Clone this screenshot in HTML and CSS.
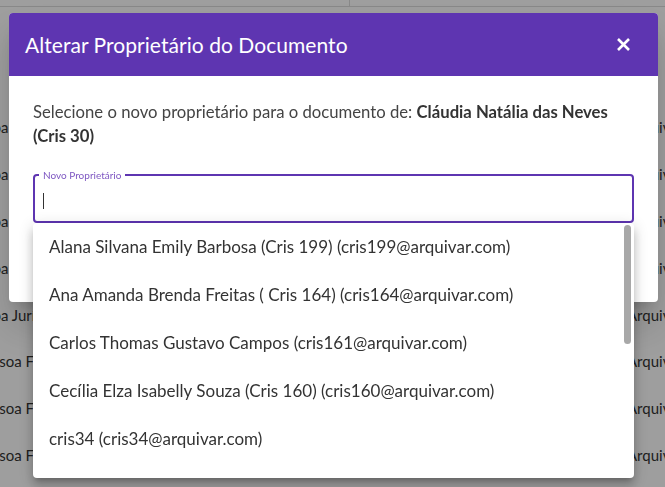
FILE: index.html
```html
<!DOCTYPE html>
<html lang="pt-BR">
<head>
<meta charset="utf-8">
<title>Alterar Proprietário do Documento</title>
<link rel="stylesheet" href="styles.css">
</head>
<body>
<div class="page">
  <div class="thead"><div class="cell"></div><div class="cell mid"></div><div class="cell"></div></div>
  <div class="tbody">
    <div class="row"><div class="cell c1">Pessoa Jurídica</div><div class="cell mid"></div><div class="cell c3">Arquivado</div></div>
    <div class="row"><div class="cell c1">Pessoa Jurídica</div><div class="cell mid"></div><div class="cell c3">Arquivado</div></div>
    <div class="row"><div class="cell c1">Pessoa Jurídica</div><div class="cell mid"></div><div class="cell c3">Arquivado</div></div>
    <div class="row"><div class="cell c1">Pessoa Jurídica</div><div class="cell mid"></div><div class="cell c3">Arquivado</div></div>
    <div class="row"><div class="cell c1">Pessoa Jurídica</div><div class="cell mid"></div><div class="cell c3">Arquivado</div></div>
    <div class="row"><div class="cell c1">Pessoa Física</div><div class="cell mid"></div><div class="cell c3">Arquivado</div></div>
    <div class="row"><div class="cell c1">Pessoa Física</div><div class="cell mid"></div><div class="cell c3">Arquivado</div></div>
    <div class="row"><div class="cell c1">Pessoa Física</div><div class="cell mid"></div><div class="cell c3">Arquivado</div></div>
  </div>
</div>

<div class="overlay">
  <div class="modal">
    <div class="modal-header">
      <h2 class="modal-title">Alterar Proprietário do Documento</h2>
      <svg class="close" width="15" height="15" viewBox="0 0 15 15" aria-label="Fechar">
        <path d="M2 2 L13 13 M13 2 L2 13" stroke="#fff" stroke-width="2.6" stroke-linecap="butt" fill="none"/>
      </svg>
    </div>
    <div class="modal-body">
      <p class="intro">Selecione o novo proprietário para o documento de: <strong>Cláudia Natália das Neves (Cris 30)</strong></p>
      <div class="field">
        <fieldset class="outline">
          <legend class="label">Novo Proprietário</legend>
          <div class="input"><span class="caret"></span></div>
        </fieldset>
        <div class="menu">
          <ul class="options">
            <li class="option">Alana Silvana Emily Barbosa (Cris 199) (cris199@arquivar.com)</li>
            <li class="option">Ana Amanda Brenda Freitas ( Cris 164) (cris164@arquivar.com)</li>
            <li class="option">Carlos Thomas Gustavo Campos (cris161@arquivar.com)</li>
            <li class="option">Cecília Elza Isabelly Souza (Cris 160) (cris160@arquivar.com)</li>
            <li class="option">cris34 (cris34@arquivar.com)</li>
            <li class="option">Daniela Luana Rocha (Cris 158) (cris158@arquivar.com)</li>
            <li class="option">Eduardo Henrique Lima (Cris 150) (cris150@arquivar.com)</li>
            <li class="option">Fernanda Beatriz Costa (Cris 145) (cris145@arquivar.com)</li>
            <li class="option">Gabriel Mateus Alves (Cris 140) (cris140@arquivar.com)</li>
            <li class="option">Helena Sofia Martins (Cris 132) (cris132@arquivar.com)</li>
            <li class="option">Isabela Vitória Ramos (Cris 128) (cris128@arquivar.com)</li>
          </ul>
          <div class="thumb"></div>
        </div>
      </div>
    </div>
  </div>
</div>
</body>
</html>
```

FILE: styles.css
```css
* { box-sizing: border-box; }

body {
  margin: 0;
  font-family: Lato, "Noto Sans", sans-serif;
  color: #333;
  background: #fff;
}

/* background page (table behind the overlay) */
.page {
  height: 487px;
  overflow: hidden;
}

.thead,
.row {
  display: grid;
  grid-template-columns: 449px 278px 1fr;
  margin-left: -100px;
}

.thead {
  height: 7px;
  border-bottom: 1px solid #dcdcdc;
}

.tbody {
  padding-top: 97px;
}

.row {
  height: 46.8px;
  align-items: center;
  font-size: 15px;
  color: #333;
}

.cell { height: 100%; display: flex; align-items: center; }

.mid { border-left: 1px solid #dcdcdc; }

.c1 {
  justify-content: flex-end;
  padding-right: 287px;
  white-space: nowrap;
}

.c3 { white-space: nowrap; }

/* overlay + modal */
.overlay {
  position: fixed;
  inset: 0;
  background: rgba(0, 0, 0, 0.38);
  display: flex;
  align-items: flex-start;
  padding: 13px 7px 0 9px;
}

.modal {
  flex: 1;
  background: #fff;
  border-radius: 4px;
  box-shadow: 0 11px 15px -7px rgba(0,0,0,.2), 0 24px 38px 3px rgba(0,0,0,.14);
}

.modal-header {
  height: 63px;
  background: #5e35b1;
  border-radius: 4px 4px 0 0;
  display: flex;
  align-items: center;
  justify-content: space-between;
  padding: 0 27px 0 16px;
}

.modal-title {
  margin: 0;
  font-size: 21px;
  font-weight: 400;
  letter-spacing: 0.05px;
  color: #fff;
}

.close { display: block; }

.modal-body {
  padding: 24px 24px 79px;
}

.intro {
  margin: 0;
  font-size: 16.7px;
  line-height: 24px;
  color: #444;
}

.intro strong {
  font-weight: 700;
  color: #333;
}

.field {
  position: relative;
  margin-top: 21px;
}

.outline {
  margin: 0;
  padding: 0 8px;
  border: 2px solid #5e35b1;
  border-radius: 4px;
}

.label {
  padding: 0 4px;
  margin-left: -4px;
  font-size: 10px;
  line-height: 12px;
  color: #7e57c2;
}

.input {
  height: 40px;
  display: flex;
  align-items: center;
}

.caret {
  width: 1px;
  height: 16px;
  background: #333;
}

.menu {
  position: absolute;
  top: 100%;
  left: 0;
  right: 0;
  height: 255px;
  background: #fff;
  border-radius: 4px;
  overflow: hidden;
  box-shadow: 0 5px 5px -3px rgba(0,0,0,.2), 0 8px 10px 1px rgba(0,0,0,.14), 0 3px 14px 2px rgba(0,0,0,.12);
  z-index: 2;
}

.options {
  list-style: none;
  margin: 0;
  padding: 0;
}

.option {
  height: 48px;
  line-height: 48px;
  padding: 0 16px;
  font-size: 17px;
  color: #333;
  white-space: nowrap;
}

.thumb {
  position: absolute;
  top: 2px;
  right: 3px;
  width: 7px;
  height: 119px;
  border-radius: 4px;
  background: #a8a8a8;
}
```
